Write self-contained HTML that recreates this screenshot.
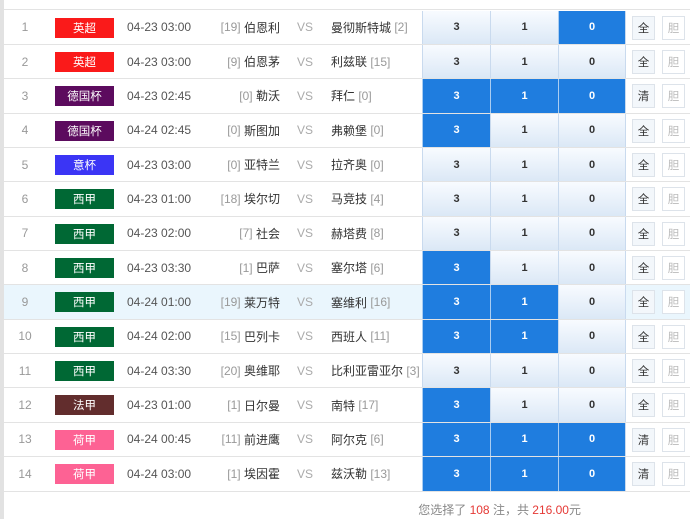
<!DOCTYPE html>
<html><head><meta charset="utf-8"><style>
*{margin:0;padding:0;box-sizing:border-box}
body{width:690px;height:519px;background:#fff;font-family:"Liberation Sans","Noto Sans CJK SC",sans-serif;font-size:12px;color:#333;position:relative;overflow:hidden}
.lb{position:absolute;left:0;top:0;width:4px;height:519px;background:#e2e2e2}
.row{position:absolute;left:4px;width:686px;height:34.36px;border-bottom:1px solid #e3e3e3}
.row.hl{background:#eaf6fd}
.row>div{position:absolute;top:0;height:100%;display:flex;align-items:center}
.n{left:0;width:42px;justify-content:center;color:#999}
.lg{left:51px!important;width:59px;height:20px!important;top:7px!important;justify-content:center;color:#fff;font-size:11.5px}
.t{left:123px;color:#555}
.h{left:180px;width:96px;justify-content:flex-end}
.vs{left:290px;width:22px;justify-content:center;color:#aaa}
.a{left:327px}
.r{color:#999}
.o{width:68px;justify-content:center;font-weight:bold;font-size:11px;background:linear-gradient(#f8fbff,#dbe8f6);border-left:1px solid #c9daee;color:#333}
.o.s{background:#1f7ddf;color:#fff;border-left:1px solid #a9cdf2}
.o1{left:418px}.o2{left:486px}.o3{left:554px;border-right:1px solid #c9daee}
.b{width:23px;height:24px!important;top:5px!important;justify-content:center;border:1px solid #dde3ea;font-size:11.5px}
.b1{left:628px;background:#f3f7fb;color:#333}
.b2{left:658px;color:#bbb;background:#fff}
.ft{position:absolute;left:0;width:690px;top:501px;text-align:right;padding-right:109px;color:#888;font-size:12px}
.ft span{color:#e53935}
</style></head><body>
<div class="lb"></div>
<div class="row" style="top:-24px"></div>

<div class="row" style="top:10.5px"><div class="n">1</div><div class="lg" style="background:#fa1a1a">英超</div><div class="t">04-23 03:00</div><div class="h"><span class="r">[19]&nbsp;</span>伯恩利</div><div class="vs">VS</div><div class="a">曼彻斯特城&nbsp;<span class="r">[2]</span></div><div class="o o1">3</div><div class="o o2">1</div><div class="o o3 s">0</div><div class="b b1">全</div><div class="b b2">胆</div></div>

<div class="row" style="top:44.86px"><div class="n">2</div><div class="lg" style="background:#fa1a1a">英超</div><div class="t">04-23 03:00</div><div class="h"><span class="r">[9]&nbsp;</span>伯恩茅</div><div class="vs">VS</div><div class="a">利兹联&nbsp;<span class="r">[15]</span></div><div class="o o1">3</div><div class="o o2">1</div><div class="o o3">0</div><div class="b b1">全</div><div class="b b2">胆</div></div>

<div class="row" style="top:79.22px"><div class="n">3</div><div class="lg" style="background:#5c0b5e">德国杯</div><div class="t">04-23 02:45</div><div class="h"><span class="r">[0]&nbsp;</span>勒沃</div><div class="vs">VS</div><div class="a">拜仁&nbsp;<span class="r">[0]</span></div><div class="o o1 s">3</div><div class="o o2 s">1</div><div class="o o3 s">0</div><div class="b b1">清</div><div class="b b2">胆</div></div>

<div class="row" style="top:113.58px"><div class="n">4</div><div class="lg" style="background:#5c0b5e">德国杯</div><div class="t">04-24 02:45</div><div class="h"><span class="r">[0]&nbsp;</span>斯图加</div><div class="vs">VS</div><div class="a">弗赖堡&nbsp;<span class="r">[0]</span></div><div class="o o1 s">3</div><div class="o o2">1</div><div class="o o3">0</div><div class="b b1">全</div><div class="b b2">胆</div></div>

<div class="row" style="top:147.94px"><div class="n">5</div><div class="lg" style="background:#3b35f5">意杯</div><div class="t">04-23 03:00</div><div class="h"><span class="r">[0]&nbsp;</span>亚特兰</div><div class="vs">VS</div><div class="a">拉齐奥&nbsp;<span class="r">[0]</span></div><div class="o o1">3</div><div class="o o2">1</div><div class="o o3">0</div><div class="b b1">全</div><div class="b b2">胆</div></div>

<div class="row" style="top:182.3px"><div class="n">6</div><div class="lg" style="background:#006834">西甲</div><div class="t">04-23 01:00</div><div class="h"><span class="r">[18]&nbsp;</span>埃尔切</div><div class="vs">VS</div><div class="a">马竞技&nbsp;<span class="r">[4]</span></div><div class="o o1">3</div><div class="o o2">1</div><div class="o o3">0</div><div class="b b1">全</div><div class="b b2">胆</div></div>

<div class="row" style="top:216.66px"><div class="n">7</div><div class="lg" style="background:#006834">西甲</div><div class="t">04-23 02:00</div><div class="h"><span class="r">[7]&nbsp;</span>社会</div><div class="vs">VS</div><div class="a">赫塔费&nbsp;<span class="r">[8]</span></div><div class="o o1">3</div><div class="o o2">1</div><div class="o o3">0</div><div class="b b1">全</div><div class="b b2">胆</div></div>

<div class="row" style="top:251.02px"><div class="n">8</div><div class="lg" style="background:#006834">西甲</div><div class="t">04-23 03:30</div><div class="h"><span class="r">[1]&nbsp;</span>巴萨</div><div class="vs">VS</div><div class="a">塞尔塔&nbsp;<span class="r">[6]</span></div><div class="o o1 s">3</div><div class="o o2">1</div><div class="o o3">0</div><div class="b b1">全</div><div class="b b2">胆</div></div>

<div class="row hl" style="top:285.38px"><div class="n">9</div><div class="lg" style="background:#006834">西甲</div><div class="t">04-24 01:00</div><div class="h"><span class="r">[19]&nbsp;</span>莱万特</div><div class="vs">VS</div><div class="a">塞维利&nbsp;<span class="r">[16]</span></div><div class="o o1 s">3</div><div class="o o2 s">1</div><div class="o o3">0</div><div class="b b1">全</div><div class="b b2">胆</div></div>

<div class="row" style="top:319.74px"><div class="n">10</div><div class="lg" style="background:#006834">西甲</div><div class="t">04-24 02:00</div><div class="h"><span class="r">[15]&nbsp;</span>巴列卡</div><div class="vs">VS</div><div class="a">西班人&nbsp;<span class="r">[11]</span></div><div class="o o1 s">3</div><div class="o o2 s">1</div><div class="o o3">0</div><div class="b b1">全</div><div class="b b2">胆</div></div>

<div class="row" style="top:354.1px"><div class="n">11</div><div class="lg" style="background:#006834">西甲</div><div class="t">04-24 03:30</div><div class="h"><span class="r">[20]&nbsp;</span>奥维耶</div><div class="vs">VS</div><div class="a">比利亚雷亚尔&nbsp;<span class="r">[3]</span></div><div class="o o1">3</div><div class="o o2">1</div><div class="o o3">0</div><div class="b b1">全</div><div class="b b2">胆</div></div>

<div class="row" style="top:388.46px"><div class="n">12</div><div class="lg" style="background:#622d2d">法甲</div><div class="t">04-23 01:00</div><div class="h"><span class="r">[1]&nbsp;</span>日尔曼</div><div class="vs">VS</div><div class="a">南特&nbsp;<span class="r">[17]</span></div><div class="o o1 s">3</div><div class="o o2">1</div><div class="o o3">0</div><div class="b b1">全</div><div class="b b2">胆</div></div>

<div class="row" style="top:422.82px"><div class="n">13</div><div class="lg" style="background:#fd6294">荷甲</div><div class="t">04-24 00:45</div><div class="h"><span class="r">[11]&nbsp;</span>前进鹰</div><div class="vs">VS</div><div class="a">阿尔克&nbsp;<span class="r">[6]</span></div><div class="o o1 s">3</div><div class="o o2 s">1</div><div class="o o3 s">0</div><div class="b b1">清</div><div class="b b2">胆</div></div>

<div class="row" style="top:457.18px"><div class="n">14</div><div class="lg" style="background:#fd6294">荷甲</div><div class="t">04-24 03:00</div><div class="h"><span class="r">[1]&nbsp;</span>埃因霍</div><div class="vs">VS</div><div class="a">兹沃勒&nbsp;<span class="r">[13]</span></div><div class="o o1 s">3</div><div class="o o2 s">1</div><div class="o o3 s">0</div><div class="b b1">清</div><div class="b b2">胆</div></div>

<div class="ft">您选择了 <span>108</span> 注，共 <span>216.00</span>元</div>
</body></html>
